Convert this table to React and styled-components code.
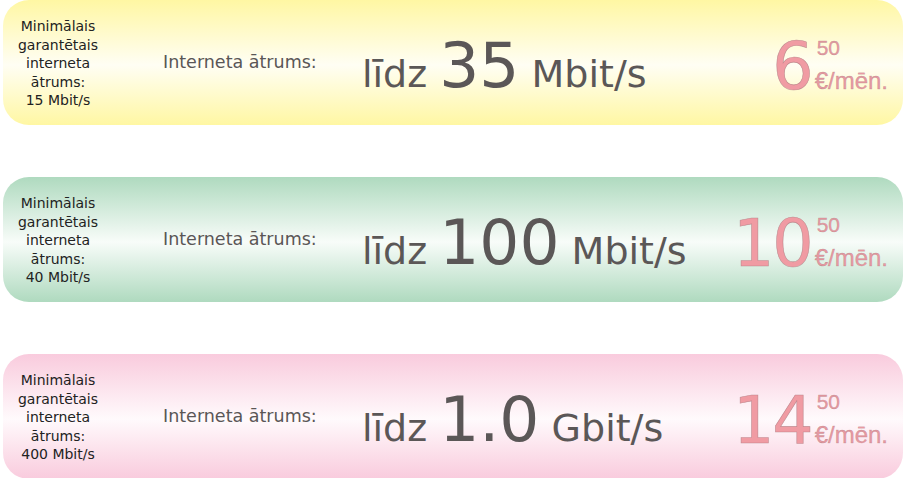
import React from 'react'
import styled, { createGlobalStyle } from 'styled-components';

const GlobalStyle = createGlobalStyle`
  body {
    margin: 0;
    background: #ffffff;
    font-family: 'DejaVu Sans', 'Noto Sans', sans-serif;
  }
`;

const Page = styled.div`
  display: flex;
  flex-direction: column;
  gap: 52px;
  padding-left: 3px;
  width: 900px;
`;

const Card = styled.div`
  display: grid;
  grid-template-columns: 110px 249px 1fr auto;
  align-items: center;
  height: 125px;
  padding-right: 15px;
  border-radius: 26px;
  background: linear-gradient(
    to bottom,
    ${props => props.$edge} 0%,
    ${props => props.$mid} 52%,
    ${props => props.$edge} 100%
  );
`;

const MinText = styled.div`
  text-align: center;
  font-size: 14px;
  line-height: 18.5px;
  color: #222222;
  margin-top: 2px;
`;

const Label = styled.div`
  padding-left: 50px;
  font-size: 17.5px;
  color: #5a5656;
  margin-top: -2px;
`;

const Speed = styled.div`
  font-size: 38px;
  line-height: 40px;
  color: #5b5757;
  white-space: nowrap;
  margin-top: 14px;
`;

const SpeedValue = styled.span`
  font-size: 63px;
`;

const Price = styled.div`
  white-space: nowrap;
  line-height: 1;
  margin-top: 2px;
  color: #f09ba3;
  -webkit-text-stroke: 0.6px rgba(170, 120, 125, 0.7);
`;

const Amount = styled.span`
  font-family: 'DejaVu Sans', sans-serif;
  font-size: 65px;
  letter-spacing: -2px;
`;

const Unit = styled.span`
  display: inline-block;
  margin-left: 3px;
  font-family: 'Liberation Sans', Arial, sans-serif;
  -webkit-text-stroke: 0.4px rgba(170, 120, 125, 0.6);
  color: #e89aa2;
`;

const Cents = styled.div`
  font-size: 21px;
  line-height: 40px;
  padding-left: 2px;
`;

const PerMonth = styled.div`
  font-size: 24px;
  line-height: 26px;
`;

const plans = [
  { min: '15 Mbit/s', speed: '35', unit: 'Mbit/s', price: '6', edge: '#fff7a3', mid: '#fffef4' },
  { min: '40 Mbit/s', speed: '100', unit: 'Mbit/s', price: '10', edge: '#afdabf', mid: '#f8fcf9' },
  { min: '400 Mbit/s', speed: '1.0', unit: 'Gbit/s', price: '14', edge: '#f9cbdd', mid: '#fffafc' },
];

function App() {
  return (
    <>
      <GlobalStyle />
      <Page>
        {plans.map(p => (
          <Card key={p.speed} $edge={p.edge} $mid={p.mid}>
            <MinText>
              Minimālais<br />
              garantētais<br />
              interneta<br />
              ātrums:<br />
              {p.min}
            </MinText>
            <Label>Interneta ātrums:</Label>
            <Speed>
              līdz <SpeedValue>{p.speed}</SpeedValue> {p.unit}
            </Speed>
            <Price>
              <Amount>{p.price}</Amount>
              <Unit>
                <Cents>50</Cents>
                <PerMonth>€/mēn.</PerMonth>
              </Unit>
            </Price>
          </Card>
        ))}
      </Page>
    </>
  )
}

export default App
